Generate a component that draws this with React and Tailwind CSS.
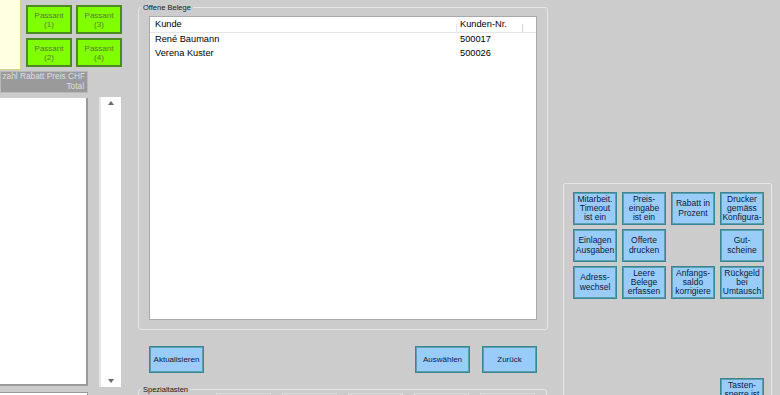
const passants = ["1", "3", "2", "4"];

const specialKeys = [
  ["Mitarbeit.", "Timeout", "ist ein"],
  ["Preis-", "eingabe", "ist ein"],
  ["Rabatt in", "Prozent"],
  ["Drucker", "gemäss", "Konfigura-"],
  ["Einlagen", "Ausgaben"],
  ["Offerte", "drucken"],
  null,
  ["Gut-", "scheine"],
  ["Adress-", "wechsel"],
  ["Leere", "Belege", "erfassen"],
  ["Anfangs-", "saldo", "korrigiere"],
  ["Rückgeld", "bei", "Umtausch"],
];

const belege = [
  { kunde: "René Baumann", nr: "500017" },
  { kunde: "Verena Kuster", nr: "500026" },
];

const BlueButton = ({ children, className = "" }) => (
  <div
    className={`flex items-center justify-center text-center bg-[#99ccf8] border border-[#3b8594] shadow-[inset_0_0_0_1px_#5c9fae] text-[#0d1b3e] ${className}`}
  >
    {children}
  </div>
);

const App = () => {
  return (
    <div className="w-[780px] h-[395px] overflow-hidden bg-[#cccccc] flex items-start font-['Liberation_Sans',Arial,sans-serif]">

      {/* left column */}
      <div className="w-[125px] shrink-0">
        <div className="flex items-start">
          <div className="w-[21px] h-[70px] bg-[#ffffe1] border-r border-b border-[#d2d290]"></div>
          <div className="ml-[5px] mt-[5px] grid grid-cols-2 gap-x-[4px] gap-y-[4px]">
            {passants.map((p) => (
              <div
                key={p}
                className="w-[46px] h-[29px] bg-[#80ff00] border-2 border-[#4e8a22] flex flex-col items-center justify-center text-[8px] leading-[9px] text-[#587a3c]"
              >
                <span>Passant</span>
                <span>({p})</span>
              </div>
            ))}
          </div>
        </div>

        <div className="mt-[1px] w-[88px] h-[22px] bg-[#9a9a9a] border border-[#b8b8b8] text-[8.3px] leading-[9.5px] text-[#dedede] flex flex-col items-end pr-[2px] overflow-hidden">
          <div className="flex justify-end w-full whitespace-nowrap overflow-hidden">
            <span>zahl Rabatt Preis CHF</span>
          </div>
          <span className="pr-[1px]">Total</span>
        </div>

        <div className="flex items-start mt-[4px]">
          <div className="mt-[1px] w-[88px] h-[288px] bg-white border-r-2 border-b-2 border-[#9a9a9a]"></div>
          <div className="ml-[11px] w-[22px] h-[290px] bg-white border-l-2 border-[#e6e6e6] flex flex-col items-center justify-between py-[4px]">
            <svg width="6" height="4" viewBox="0 0 6 4">
              <path d="M3 0 L6 4 L0 4 Z" fill="#6a6a6a" />
            </svg>
            <svg width="6" height="4" viewBox="0 0 6 4">
              <path d="M0 0 L6 0 L3 4 Z" fill="#6a6a6a" />
            </svg>
          </div>
        </div>

        <div className="mt-[5px] w-[88px] h-[10px] bg-white border-t border-r border-[#9a9a9a]"></div>
      </div>

      {/* middle column */}
      <div className="ml-[13px] w-[409px] shrink-0">
        <fieldset className="mt-[2.5px] border border-[#e6e6e6] rounded-[3px] px-[10px] pt-[4.5px] pb-[9px]">
          <legend className="-ml-[8px] px-[2px] text-[7.5px] leading-[9px] text-[#1a1a1a]">
            Offene Belege
          </legend>
          <div className="w-[388px] h-[304px] bg-white border border-[#a9a9a9] text-[9.25px] text-black">
            <div className="relative h-[16px] border-b border-[#e5e5e5] flex items-center">
              <span className="pl-[5px] w-[310px]">Kunde</span>
              <span>Kunden-Nr.</span>
              <span className="absolute left-[306px] top-[7px] h-[8px] w-px bg-[#e2e8f0]"></span>
              <span className="absolute left-[372px] top-[7px] h-[8px] w-px bg-[#cdd6e4]"></span>
            </div>
            {belege.map((b) => (
              <div key={b.nr} className="h-[14px] flex items-center">
                <span className="pl-[5px] w-[310px]">{b.kunde}</span>
                <span>{b.nr}</span>
              </div>
            ))}
          </div>
        </fieldset>

        <div className="mt-[16px] flex items-start pl-[11px] pr-[10px] text-[8px]">
          <BlueButton className="w-[55px] h-[27px]">Aktualisieren</BlueButton>
          <div className="flex-1"></div>
          <BlueButton className="w-[55px] h-[27px]">Auswählen</BlueButton>
          <BlueButton className="ml-[12px] w-[55px] h-[27px]">Zurück</BlueButton>
        </div>

        <fieldset className="mt-[12.5px] border border-[#e6e6e6] rounded-[3px] px-[10px] h-[40px]">
          <legend className="-ml-[8px] px-[2px] text-[7.5px] leading-[8px] text-[#1a1a1a]">
            Spezialtasten
          </legend>
          <div className="ml-[67px] flex gap-[11px] -mt-[1px]">
            {[0, 1, 2, 3, 4].map((i) => (
              <div key={i} className="w-[55px] h-[20px] border border-[#dadada] bg-[#cfcfcf]"></div>
            ))}
          </div>
        </fieldset>
      </div>

      {/* right column */}
      <div className="ml-[16px] mt-[183px] w-[209px] h-[230px] shrink-0 border border-[#e6e6e6] rounded-[2px] pl-[9px] pt-[8px]">
        <div className="grid grid-cols-[repeat(4,44px)] gap-x-[5px] gap-y-[4px] text-[8.5px] leading-[9.3px]">
          {specialKeys.map((k, i) =>
            k ? (
              <BlueButton key={i} className="h-[33px] flex-col">
                {k.map((line) => (
                  <span key={line}>{line}</span>
                ))}
              </BlueButton>
            ) : (
              <div key={i} className="h-[33px]"></div>
            )
          )}
        </div>
        <div className="mt-[79px] w-[191px] flex justify-end text-[8.5px] leading-[9.3px]">
          <BlueButton className="w-[44px] h-[33px] flex-col">
            <span>Tasten-</span>
            <span>sperre ist</span>
            <span>ein</span>
          </BlueButton>
        </div>
      </div>
    </div>
  );
};

export default App;
